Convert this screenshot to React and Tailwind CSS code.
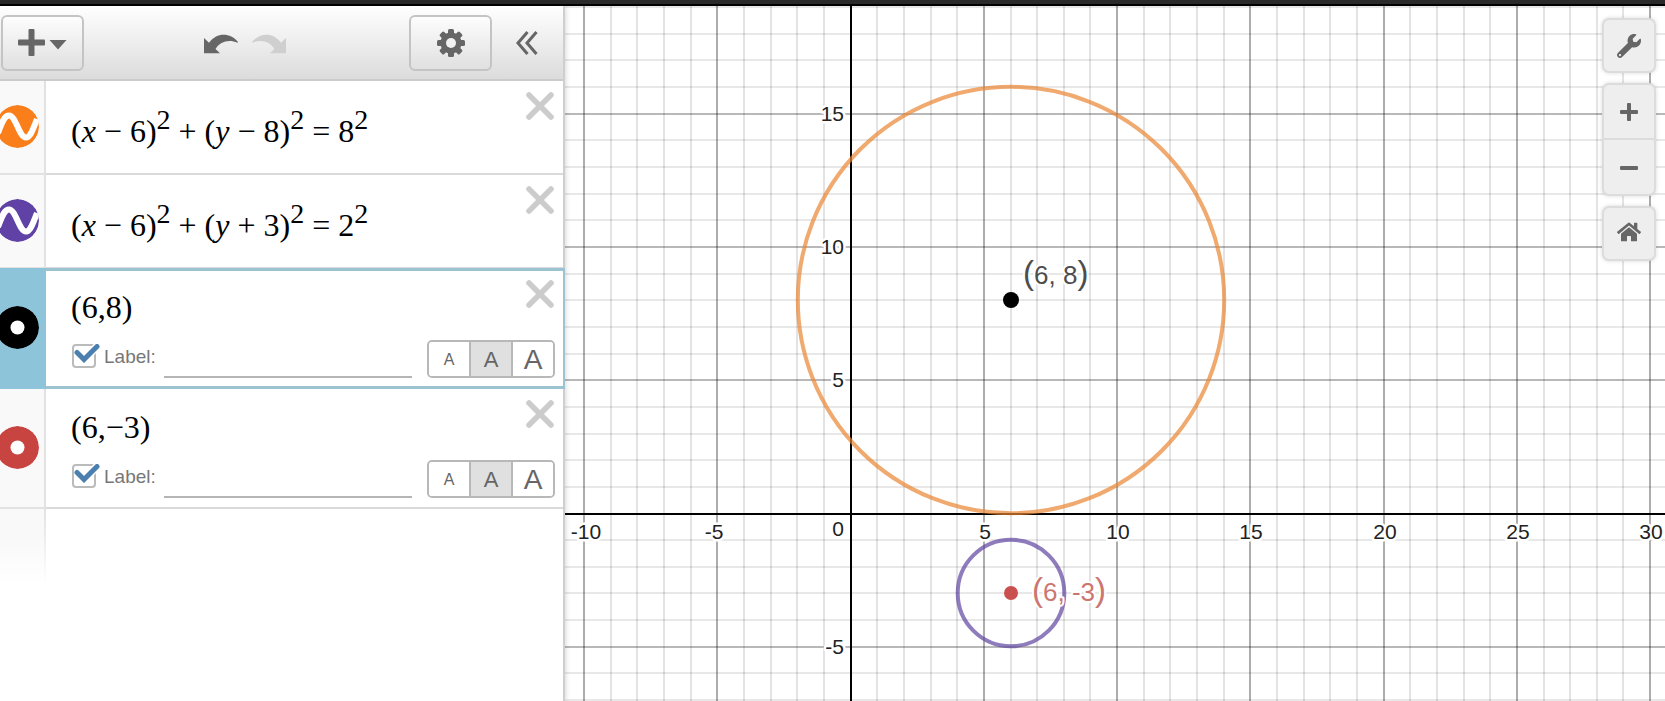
import React, { useState } from "react";
import { FaHome, FaWrench } from "react-icons/fa";

const EXPRESSIONS = [
	{
		id: 1,
		kind: "curve",
		color: "#fa7e19",
		tokens: ["(", "x", "−", "6", ")", "^2", "+", "(", "y", "−", "8", ")", "^2", "=", "8", "^2"],
	},
	{
		id: 2,
		kind: "curve",
		color: "#6042a6",
		tokens: ["(", "x", "−", "6", ")", "^2", "+", "(", "y", "+", "3", ")", "^2", "=", "2", "^2"],
	},
	{ id: 3, kind: "point", color: "#000000", text: "(6,8)" },
	{ id: 4, kind: "point", color: "#c74440", text: "(6,−3)" },
];

const SIZES = [
	{ name: "small", className: "text-[16px]" },
	{ name: "medium", className: "text-[22px]" },
	{ name: "large", className: "text-[28px]" },
];

// graph viewport, in pixels from the top left corner of the paper
const ORIGIN_X = 285.6;
const ORIGIN_Y = 507.5;
const UNIT = 26.65;

const toX = (x) => Math.round(ORIGIN_X + x * UNIT);
const toY = (y) => Math.round(ORIGIN_Y - y * UNIT);
const range = (from, to) =>
	Array.from({ length: to - from + 1 }, (_, i) => from + i);

const COLUMNS = range(-10, 60);
const ROWS = range(-30, 19);
const X_LABELS = [-10, -5, 5, 10, 15, 20, 25, 30];
const Y_LABELS = [15, 10, 5, -5];

// negative labels sit left of their line, but never leave the paper
const labelX = (n) => (n < 0 ? Math.max(21, toX(n) - 3) : toX(n) + 1);

function GearIcon() {
	return (
		<svg width="28" height="28" viewBox="-14 -14 28 28" fill="#666">
			{range(0, 3).map((i) => (
				<rect
					key={i}
					x="-3"
					y="-14"
					width="6"
					height="28"
					rx="1.5"
					transform={`rotate(${i * 45})`}
				/>
			))}
			<circle r="10.6" />
			<circle r="5" fill="#f1f1f1" />
		</svg>
	);
}

function ArrowIcon({ flip }) {
	return (
		<svg
			width="34"
			height="20"
			viewBox="0 0 34 20"
			fill={flip ? "#cfcfcf" : "#666"}
		>
			<path
				transform={flip ? "translate(34 0) scale(-1 1)" : undefined}
				d="M0 4V19.3H16L11.5 15C16 7.5 25 5 33.5 8.8L34 8C26 -1.8 12.5 -1.8 5 8.8Z"
			/>
		</svg>
	);
}

function ExpressionIcon({ kind, color }) {
	return (
		<svg width="43" height="43" viewBox="0 0 43 43" className="shrink-0 rounded-full">
			<circle cx="21.5" cy="21.5" r="21.5" fill={color} />
			{kind === "curve" ? (
				<path
					d="M2 28C6 18 8 10.5 13 10.5C20 10.5 23 32.5 30 32.5C34.5 32.5 37 24 41 14"
					fill="none"
					stroke="#fff"
					strokeWidth="6"
				/>
			) : (
				<circle cx="21.5" cy="21.5" r="7" fill="#fff" />
			)}
		</svg>
	);
}

function Formula({ tokens }) {
	return (
		<div className="flex items-baseline font-['Liberation_Serif',serif] text-[32px] leading-[36px] text-black">
			{tokens.map((token, i) => {
				if (token[0] === "^") {
					return (
						<sup key={i} className="relative -top-[13px] text-[28px] leading-none">
							{token.slice(1)}
						</sup>
					);
				}
				if ("+−=".includes(token)) {
					return (
						<span key={i} className="mx-[8px]">
							{token}
						</span>
					);
				}
				if ("xy".includes(token)) {
					return (
						<span key={i} className="italic">
							{token}
						</span>
					);
				}
				return <span key={i}>{token}</span>;
			})}
		</div>
	);
}

function LabelControls({ id }) {
	const [checked, setChecked] = useState(true);
	const [size, setSize] = useState("medium");

	return (
		<div className="flex items-center pl-px pr-[8px] h-[38px]">
			<span className="relative w-[24px] h-[24px] -mt-[6px]">
				<input
					id={`label-${id}`}
					type="checkbox"
					checked={checked}
					onChange={(e) => setChecked(e.target.checked)}
					className="block w-[24px] h-[24px] appearance-none rounded-[4px] border-2 border-[#bbb] bg-white"
				/>
				{checked && (
					<svg
						width="28"
						height="24"
						viewBox="0 0 28 24"
						className="absolute top-0 left-0 pointer-events-none"
						fill="none"
					>
						<path d="M4.5 8L12 15.5L25 2.5" stroke="#fff" strokeWidth="8" />
						<path
							d="M5 8.5L12 15.5L25 2.5"
							stroke="#4a7fb0"
							strokeWidth="5"
							strokeLinecap="round"
						/>
					</svg>
				)}
			</span>
			<label
				htmlFor={`label-${id}`}
				className="ml-[8px] -mt-[4px] text-[19px] leading-[24px] text-[#777]"
			>
				Label:
			</label>
			<input
				type="text"
				aria-label="Label text"
				className="ml-[8px] h-[38px] min-w-0 flex-1 border-b-2 border-[#b5b5b5] bg-transparent text-[19px] outline-none"
			/>
			<div className="ml-[15px] flex h-[38px] w-[128px] overflow-hidden rounded-[5px] border-2 border-[#b8b8b8] divide-x-2 divide-[#b8b8b8]">
				{SIZES.map(({ name, className }) => (
					<button
						key={name}
						type="button"
						aria-label={name}
						onClick={() => setSize(name)}
						className={`flex flex-1 items-center justify-center pt-[2px] leading-none text-[#666] ${className} ${size === name ? "bg-[#e0e0e0]" : "bg-white"}`}
					>
						A
					</button>
				))}
			</div>
		</div>
	);
}

function Expression({ item, selected }) {
	const isPoint = item.kind === "point";

	return (
		<li
			className={`relative flex ${isPoint ? "h-[120px]" : "h-[94px]"} ${selected ? "-mt-px -mr-[2px] h-[121px]" : ""}`}
		>
			<div
				className={`flex w-[46px] shrink-0 items-center overflow-hidden border-r-2 pb-[2px] ${selected ? "border-[#8ec4da] bg-[#8ec4da]" : "border-b-2 border-r-[#e2e2e2] border-b-[#e2e2e2] bg-[#f9f9f9]"}`}
			>
				<button type="button" aria-label="Toggle" className="-ml-[4px] shrink-0">
					<ExpressionIcon kind={item.kind} color={item.color} />
				</button>
			</div>
			<div
				className={`flex min-w-0 flex-1 bg-white ${selected ? "border-y-3 border-r-2 border-[#9cc3d1]" : "border-b-2 border-[#dadada]"}`}
			>
				<div
					className={`min-w-0 flex-1 pl-[25px] ${isPoint ? (selected ? "pt-[18px]" : "pt-[20px]") : "pt-[32px]"}`}
				>
					{isPoint ? (
						<div className="mb-[14px] font-['Liberation_Serif',serif] text-[32px] leading-[37px] text-black">
							{item.text}
						</div>
					) : (
						<Formula tokens={item.tokens} />
					)}
					{isPoint && <LabelControls id={item.id} />}
				</div>
				<button
					type="button"
					aria-label="Delete"
					className={`absolute ${selected ? "top-[12px] right-[11px]" : "top-[11px] right-[9px]"}`}
				>
					<svg width="28" height="28" viewBox="0 0 28 28">
						<path
							d="M3 3L25 25M25 3L3 25"
							stroke="#ccc"
							strokeWidth="5.5"
							strokeLinecap="round"
						/>
					</svg>
				</button>
			</div>
		</li>
	);
}

function ToolbarButton({ label, children }) {
	return (
		<button
			type="button"
			aria-label={label}
			className="flex h-[56px] w-[83px] items-center justify-center gap-[4px] rounded-[6px] border-2 border-[#c4c4c4] bg-linear-to-b from-[#fdfdfd] to-[#e0e0e0]"
		>
			{children}
		</button>
	);
}

function Toolbar() {
	return (
		<div className="flex h-[75px] items-center border-b-2 border-[#cbcbcb] bg-linear-to-b from-white to-[#dcdcdc] pl-px pr-[25px]">
			<ToolbarButton label="Add item">
				<svg width="27" height="27" viewBox="0 0 27 27" fill="#666">
					<rect x="10.5" width="6" height="27" rx="1" />
					<rect y="10.5" width="27" height="6" rx="1" />
				</svg>
				<svg width="18" height="10" viewBox="0 0 18 10" className="mt-[4px]" fill="#666">
					<path d="M0.5 0H17.5L9 9.5Z" />
				</svg>
			</ToolbarButton>
			<div className="flex flex-1 justify-center gap-[14px] pt-[2px] pr-[3px]">
				<button type="button" aria-label="Undo">
					<ArrowIcon />
				</button>
				<button type="button" aria-label="Redo">
					<ArrowIcon flip />
				</button>
			</div>
			<ToolbarButton label="Settings">
				<GearIcon />
			</ToolbarButton>
			<button type="button" aria-label="Hide list" className="ml-[24px]">
				<svg width="22" height="24" viewBox="0 0 22 24" fill="none">
					<path
						d="M11.5 1L2 12L11.5 23M20.5 1L11 12L20.5 23"
						stroke="#666"
						strokeWidth="3"
					/>
				</svg>
			</button>
		</div>
	);
}

function PointLabel({ x, y, text, fill }) {
	return (
		<text
			x={x}
			y={y}
			fill={fill}
			stroke="#fff"
			strokeWidth="4"
			strokeLinejoin="round"
			paintOrder="stroke"
			className="text-[26px]"
		>
			<tspan className="text-[33px]">(</tspan>
			{text}
			<tspan className="text-[33px]">)</tspan>
		</text>
	);
}

function Graph() {
	const axisLabel = {
		fill: "#222",
		stroke: "#fff",
		strokeWidth: 5,
		strokeLinejoin: "round",
		paintOrder: "stroke",
		className: "text-[21px]",
	};

	return (
		<svg
			width="100%"
			height="100%"
			className="block min-h-0 flex-1 bg-white font-['Liberation_Sans',sans-serif]"
			role="img"
			aria-label="Graph paper"
		>
			<g stroke="#000">
				{COLUMNS.map((n) => (
					<line
						key={n}
						x1={toX(n)}
						x2={toX(n)}
						y1="0"
						y2="100%"
						strokeWidth="2"
						strokeOpacity={n % 5 === 0 ? 0.32 : 0.11}
					/>
				))}
				{ROWS.map((n) => (
					<line
						key={n}
						x1="0"
						x2="100%"
						y1={toY(n)}
						y2={toY(n)}
						strokeWidth="2"
						strokeOpacity={n % 5 === 0 ? 0.28 : 0.09}
					/>
				))}
				<line x1={toX(0)} x2={toX(0)} y1="0" y2="100%" strokeWidth="2" />
				<line x1="0" x2="100%" y1={toY(0)} y2={toY(0)} strokeWidth="2" />
			</g>

			{X_LABELS.map((n) => (
				<text key={n} x={labelX(n)} y={toY(0) + 25} textAnchor="middle" {...axisLabel}>
					{n}
				</text>
			))}
			{Y_LABELS.map((n) => (
				<text key={n} x={toX(0) - 7} y={toY(n) + 7} textAnchor="end" {...axisLabel}>
					{n}
				</text>
			))}
			<text x={toX(0) - 7} y={toY(0) + 22} textAnchor="end" {...axisLabel}>
				0
			</text>

			<g fill="none" strokeWidth="4" strokeOpacity="0.7">
				<circle cx={toX(6)} cy={toY(8)} r={8 * UNIT} stroke="#ea8430" />
				<circle cx={toX(6)} cy={toY(-3)} r={2 * UNIT} stroke="#5f45a0" />
			</g>
			<circle cx={toX(6)} cy={toY(8)} r="8" fill="#000" />
			<circle cx={toX(6)} cy={toY(-3)} r="7" fill="#c9504e" />
			<PointLabel x={toX(6) + 12} y={toY(8) - 16} text="6, 8" fill="#4d4d4d" />
			<PointLabel x={toX(6) + 21} y={toY(-3) + 8} text="6, -3" fill="#cb7671" />
		</svg>
	);
}

const GRAPH_BUTTON = "flex w-full items-center justify-center text-[#666]";
const GRAPH_GROUP =
	"w-[54px] rounded-[7px] border-2 border-[#dcdcdc] bg-[#eeeeee] shadow-[0_0_4px_rgba(0,0,0,0.15)]";

function GraphControls() {
	return (
		<div className="absolute top-[12px] right-[9px] flex flex-col gap-[10px]">
			<div className={GRAPH_GROUP}>
				<button type="button" aria-label="Graph settings" className={`${GRAPH_BUTTON} h-[51px]`}>
					<FaWrench size={24} />
				</button>
			</div>
			<div className={GRAPH_GROUP}>
				<button
					type="button"
					aria-label="Zoom in"
					className={`${GRAPH_BUTTON} h-[55px] border-b-2 border-[#dcdcdc]`}
				>
					<svg width="18" height="18" viewBox="0 0 18 18" fill="currentColor">
						<rect x="7" width="4" height="18" rx="1" />
						<rect y="7" width="18" height="4" rx="1" />
					</svg>
				</button>
				<button type="button" aria-label="Zoom out" className={`${GRAPH_BUTTON} h-[54px] pt-[2px]`}>
					<svg width="18" height="4" viewBox="0 0 18 4" fill="currentColor">
						<rect width="18" height="4" rx="1" />
					</svg>
				</button>
			</div>
			<div className={GRAPH_GROUP}>
				<button
					type="button"
					aria-label="Default view"
					className={`${GRAPH_BUTTON} h-[51px] pb-[3px]`}
				>
					<FaHome size={24} />
				</button>
			</div>
		</div>
	);
}

export default function App() {
	return (
		<div className="flex h-screen flex-col overflow-hidden bg-white font-['Liberation_Sans',sans-serif]">
			<header className="h-[6px] shrink-0 border-b-2 border-black bg-[#2a2a2a]" />
			<main className="flex min-h-0 flex-1">
				<aside className="z-10 flex w-[565px] shrink-0 flex-col border-r-2 border-[#cfcfcf] bg-white shadow-[0_0_6px_rgba(0,0,0,0.2)]">
					<Toolbar />
					<ul>
						{EXPRESSIONS.map((item) => (
							<Expression key={item.id} item={item} selected={item.id === 3} />
						))}
					</ul>
					<div className="h-[76px] w-[46px] bg-linear-to-b from-[#e2e2e2] to-white pr-[2px]">
						<div className="h-full bg-linear-to-b from-[#f9f9f9] from-40% to-white" />
					</div>
				</aside>
				<section className="relative flex min-w-0 flex-1">
					<Graph />
					<GraphControls />
				</section>
			</main>
		</div>
	);
}
